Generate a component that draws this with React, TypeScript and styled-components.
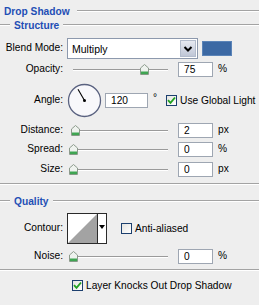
import React from 'react';
import styled, { createGlobalStyle } from 'styled-components';

const Global = createGlobalStyle`
  html, body { margin: 0; padding: 0; background: #eeeeee; }
  body {
    font-family: "Liberation Sans", Arial, sans-serif;
    font-size: 10.2px;
    color: #000;
  }
`;

const Panel = styled.div`
  width: 259px;
  height: 305px;
  overflow: hidden;
  background: #eeeeee;
  display: flex;
  flex-direction: column;
`;

const Head = styled.div<{ $lead?: boolean; $mt?: number }>`
  display: flex;
  align-items: center;
  height: 14px;
  margin-top: ${(p) => p.$mt ?? 0}px;
  padding-left: ${(p) => (p.$lead ? 0 : 4)}px;
  font-weight: bold;
  color: #1f4fb5;
  white-space: nowrap;
  &::before {
    content: '';
    display: ${(p) => (p.$lead ? 'block' : 'none')};
    width: 10px;
    margin-right: 4px;
    border-top: 1px solid #a3a3a3;
    border-bottom: 1px solid #ffffff;
  }
  &::after {
    content: '';
    flex: 1;
    margin-left: ${(p) => (p.$lead ? 4 : 7)}px;
    border-top: 1px solid #a3a3a3;
    border-bottom: 1px solid #ffffff;
  }
`;

const Separator = styled.div<{ $mt: number }>`
  margin-top: ${(p) => p.$mt}px;
  border-top: 1px solid #a3a3a3;
  border-bottom: 1px solid #ffffff;
`;

const Row = styled.div<{ $mt: number; $h: number }>`
  display: grid;
  grid-template-columns: 63px 1fr;
  column-gap: 4px;
  align-items: center;
  height: ${(p) => p.$h}px;
  margin-top: ${(p) => p.$mt}px;
`;

const Label = styled.span`
  text-align: right;
  white-space: nowrap;
  margin-top: -2px;
`;

const Controls = styled.div`
  display: flex;
  align-items: center;
  white-space: nowrap;
`;

const Select = styled.div`
  width: 131px;
  height: 21px;
  box-sizing: border-box;
  border: 1px solid #8d99ad;
  background: #fff;
  display: flex;
  align-items: center;
  padding: 0 1px 0 4px;
  flex: none;
`;

const SelectText = styled.span`
  flex: 1;
  font-size: 10.5px;
`;

const SelectButton = styled.div`
  width: 16px;
  height: 17px;
  box-sizing: border-box;
  border: 1px solid #b3bccc;
  background: linear-gradient(#e6e9f0, #bfc6d6);
  display: flex;
  align-items: center;
  justify-content: center;
`;

const Swatch = styled.div`
  width: 30px;
  height: 15px;
  margin-left: 4px;
  background: #3c69a4;
  box-shadow: inset 0 0 0 1px #5b84b8;
  flex: none;
`;

const SliderBox = styled.div`
  position: relative;
  width: 101px;
  height: 11px;
  flex: none;
`;

const Track = styled.div`
  position: absolute;
  left: 6px;
  right: 0;
  top: 5px;
  border-top: 1px solid #9a9a9a;
  border-bottom: 1px solid #ffffff;
`;

const ThumbSvg = styled.svg`
  position: absolute;
  top: 0;
  width: 9px;
  height: 11px;
`;

const NumInput = styled.input<{ $w: number; $ml: number }>`
  width: ${(p) => p.$w}px;
  height: 15px;
  box-sizing: border-box;
  margin: 0 0 0 ${(p) => p.$ml}px;
  border: 1px solid #9ea6b2;
  background: #fff;
  padding: 0 0 0 5px;
  font-family: "Liberation Sans", Arial, sans-serif;
  font-size: 10.2px;
  color: #000;
  outline: none;
  flex: none;
`;

const Unit = styled.span<{ $ml?: number; $mt?: number }>`
  margin-left: ${(p) => p.$ml ?? 5}px;
  margin-top: ${(p) => p.$mt ?? -3}px;
`;

const CheckBox = styled.div<{ $ml?: number }>`
  width: 11px;
  height: 11px;
  box-sizing: border-box;
  border: 1px solid #1c3f6e;
  background: linear-gradient(135deg, #e4e4e0, #ffffff);
  margin-left: ${(p) => p.$ml ?? 0}px;
  display: flex;
  align-items: center;
  justify-content: center;
  flex: none;
`;

const CheckText = styled.span`
  margin-left: 3px;
`;

const Dial = styled.svg`
  width: 35px;
  height: 35px;
  flex: none;
`;

const Contour = styled.div`
  width: 40px;
  height: 31px;
  box-sizing: border-box;
  border: 1px solid #2a2a2a;
  display: flex;
  flex: none;
  background: #fff;
`;

const ContourPreview = styled.svg`
  width: 29px;
  height: 29px;
  border-right: 1px solid #2a2a2a;
  flex: none;
`;

const ContourArrow = styled.div`
  flex: 1;
  display: flex;
  align-items: flex-start;
  justify-content: center;
  padding-top: 11px;
`;

const KnockRow = styled.div`
  display: flex;
  align-items: center;
  height: 14px;
  margin-top: 7px;
  padding-left: 72px;
`;

const Thumb = ({ pct }: { pct: number }) => (
  <ThumbSvg viewBox="0 0 9 11" style={{ left: 6 + pct * 95 - 4 }}>
    <path d="M4.5 0.5 L8.5 4 V10.5 H0.5 V4 Z" fill="#eef2ee" stroke="#8c9a8c" />
    <rect x="1" y="7.5" width="7" height="2.6" fill="#3fa552" />
  </ThumbSvg>
);

const Slider = ({ pct }: { pct: number }) => (
  <SliderBox>
    <Track />
    <Thumb pct={pct} />
  </SliderBox>
);

const Check = () => (
  <svg width="9" height="9" viewBox="0 0 9 9">
    <path d="M1 4.2 L3.5 6.8 L8 1.5" fill="none" stroke="#22a122" strokeWidth="1.9" />
  </svg>
);

const SliderField = ({ label, value, unit, mt }: { label: string; value: number; unit: string; mt: number }) => (
  <Row $mt={mt} $h={15}>
    <Label>{label}</Label>
    <Controls>
      <Slider pct={value / 100} />
      <NumInput $w={35} $ml={10} defaultValue={String(value)} readOnly />
      <Unit>{unit}</Unit>
    </Controls>
  </Row>
);

const angle = 120;
const rad = (angle * Math.PI) / 180;
const nx = 17.5 + 13 * Math.cos(rad);
const ny = 17.5 - 13 * Math.sin(rad);

export default function App() {
  return (
    <Panel>
      <Global />
      <Head $mt={4}>Drop Shadow</Head>
      <Head $lead>Structure</Head>

      <Row $mt={6} $h={21}>
        <Label>Blend Mode:</Label>
        <Controls>
          <Select>
            <SelectText>Multiply</SelectText>
            <SelectButton>
              <svg width="10" height="8" viewBox="0 0 10 8">
                <path d="M1.5 2 L5 5.5 L8.5 2" fill="none" stroke="#000" strokeWidth="2" />
              </svg>
            </SelectButton>
          </Select>
          <Swatch />
        </Controls>
      </Row>

      <SliderField label="Opacity:" value={75} unit="%" mt={3} />

      <Row $mt={6} $h={35}>
        <Label>Angle:</Label>
        <Controls>
          <Dial viewBox="0 0 35 35">
            <circle cx="17.5" cy="17.5" r="16" fill="#f8f8fb" stroke="#5a6280" strokeWidth="1.3" />
            <line x1="17.5" y1="17.5" x2={nx} y2={ny} stroke="#000" strokeWidth="1.1" />
            <circle cx="17.5" cy="17.5" r="1.5" fill="#000" />
          </Dial>
          <NumInput $w={43} $ml={3} defaultValue="120" readOnly />
          <Unit $ml={5} $mt={-6}>°</Unit>
          <CheckBox $ml={9}>
            <Check />
          </CheckBox>
          <CheckText>Use Global Light</CheckText>
        </Controls>
      </Row>

      <SliderField label="Distance:" value={2} unit="px" mt={5} />
      <SliderField label="Spread:" value={0} unit="%" mt={4} />
      <SliderField label="Size:" value={0} unit="px" mt={5} />

      <Separator $mt={6} />
      <Head $lead $mt={9}>Quality</Head>

      <Row $mt={5} $h={31}>
        <Label>Contour:</Label>
        <Controls>
          <Contour>
            <ContourPreview viewBox="0 0 29 29">
              <rect x="0" y="0" width="29" height="29" fill="#fff" />
              <path d="M0 29 L29 0 V29 Z" fill="#a3a3a3" />
            </ContourPreview>
            <ContourArrow>
              <svg width="6" height="4" viewBox="0 0 6 4">
                <path d="M0 0 H6 L3 4 Z" fill="#000" />
              </svg>
            </ContourArrow>
          </Contour>
          <CheckBox $ml={14} />
          <CheckText>Anti-aliased</CheckText>
        </Controls>
      </Row>

      <SliderField label="Noise:" value={0} unit="%" mt={5} />

      <Separator $mt={5} />

      <KnockRow>
        <CheckBox>
          <Check />
        </CheckBox>
        <CheckText>Layer Knocks Out Drop Shadow</CheckText>
      </KnockRow>
    </Panel>
  );
}
